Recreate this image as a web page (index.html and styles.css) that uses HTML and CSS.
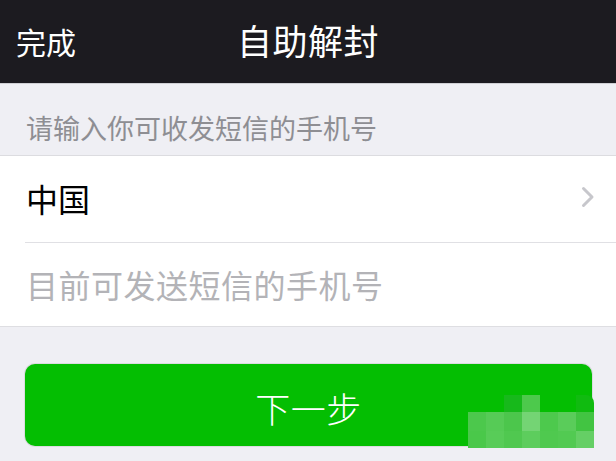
FILE: index.html
```html
<!DOCTYPE html>
<html lang="zh-CN">
<head>
<meta charset="utf-8">
<title>自助解封</title>
<link rel="stylesheet" href="styles.css">
</head>
<body>
<div class="page">
  <header class="nav">
    <span class="nav-left">完成</span>
    <h1 class="nav-title">自助解封</h1>
    <span class="nav-right"></span>
  </header>
  <div class="section-head">请输入你可收发短信的手机号</div>
  <div class="group">
    <div class="row row-country">
      <span class="row-text">中国</span>
      <svg class="chevron" width="14" height="22" viewBox="0 0 14 22"><polyline points="2.5,2.5 11,11 2.5,19.5" fill="none" stroke="#c7c7cc" stroke-width="3" stroke-linecap="round" stroke-linejoin="round"/></svg>
    </div>
    <div class="divider"></div>
    <div class="row row-input">
      <span class="placeholder">目前可发送短信的手机号</span>
    </div>
  </div>
  <div class="btn-wrap">
    <button class="btn-next"><span class="btn-label">下一步</span>
      <span class="mosaic">
        <i class="c"></i><i class="c"></i><i class="c a1"></i><i class="c a2"></i><i class="c"></i><i class="c"></i><i class="c a3"></i>
        <i class="c b1"></i><i class="c b2"></i><i class="c b3"></i><i class="c b4"></i><i class="c b5"></i><i class="c b6"></i><i class="c b7"></i>
        <i class="c d1"></i><i class="c d2"></i><i class="c d3"></i><i class="c d4"></i><i class="c d5"></i><i class="c d6"></i><i class="c d7"></i>
      </span>
    </button>
  </div>
</div>
</body>
</html>
```

FILE: styles.css
```css
* { box-sizing: border-box; }
html, body {
  margin: 0;
  padding: 0;
  background: #efeff4;
}
body {
  font-family: "Noto Sans CJK SC", "Noto Sans", sans-serif;
  width: 616px;
  height: 461px;
  overflow: hidden;
}
.page {
  display: flex;
  flex-direction: column;
}
.nav {
  height: 84px;
  background: #1c1b20;
  border-bottom: 1px solid #cfcfd4;
  display: grid;
  grid-template-columns: 1fr auto 1fr;
  align-items: center;
  padding: 0 16px;
  color: #ffffff;
}
.nav-left {
  font-size: 30px;
  line-height: 1;
  margin-top: -2px;
}
.nav-title {
  margin: -4px 0 0 0;
  font-size: 35px;
  font-weight: 400;
  line-height: 1;
  letter-spacing: 0.5px;
}
.section-head {
  height: 72px;
  padding: 15px 0 0 26px;
  display: flex;
  align-items: center;
  font-size: 27px;
  color: #8e8e93;
  border-bottom: 1px solid #dcdce0;
}
.group {
  background: #ffffff;
  border-bottom: 1px solid #dedee2;
}
.row {
  display: flex;
  align-items: center;
  padding: 0 21px 0 26px;
}
.row-country {
  height: 86px;
  justify-content: space-between;
}
.row-input {
  height: 83px;
}
.row-text {
  font-size: 32px;
  color: #000000;
  line-height: 1;
  margin-top: -2px;
}
.placeholder {
  font-size: 32px;
  color: #b3b3b7;
  line-height: 1;
  letter-spacing: 0.5px;
  margin-top: -2px;
}
.chevron {
  display: block;
  margin-top: -4px;
}
.divider {
  height: 1px;
  margin-left: 25px;
  background: #e0e0e4;
}
.btn-wrap {
  padding: 37px 24px 0 25px;
}
.btn-next {
  position: relative;
  display: flex;
  align-items: center;
  justify-content: center;
  width: 100%;
  height: 82px;
  border: none;
  border-radius: 10px;
  background: #04be02;
  box-shadow: 0 0 0 1px rgba(0, 0, 0, 0.08);
  color: #ffffff;
  font-family: "Noto Sans CJK SC", "Noto Sans", sans-serif;
  font-size: 35px;
  font-weight: 300;
  line-height: 1;
  padding: 0;
  letter-spacing: 0.5px;
}
.btn-label {
  display: block;
  margin-top: 4px;
}
.mosaic {
  position: absolute;
  left: 443px;
  top: 31px;
  display: grid;
  grid-template-columns: repeat(7, 18px);
  grid-template-rows: 17px 19px 17px;
}
.c { display: block; }
.a1 { background: #17b91b; }
.a2 { background: #4dc94c; }
.a3 { background: #10bb10; border-top-right-radius: 8px; }
.b1 { background: #4cc84c; }
.b2 { background: #56cb56; }
.b3 { background: #4cc64c; }
.b4 { background: #74d474; }
.b5 { background: #4dc94d; }
.b6 { background: #5acc5a; }
.b7 { background: #42c442; }
.d1 { background: #4ac84a; }
.d2 { background: #58cc58; }
.d3 { background: #50c850; }
.d4 { background: #5dcd5d; }
.d5 { background: #4fc94f; }
.d6 { background: #52ca52; }
.d7 { background: #65cf65; }
```
